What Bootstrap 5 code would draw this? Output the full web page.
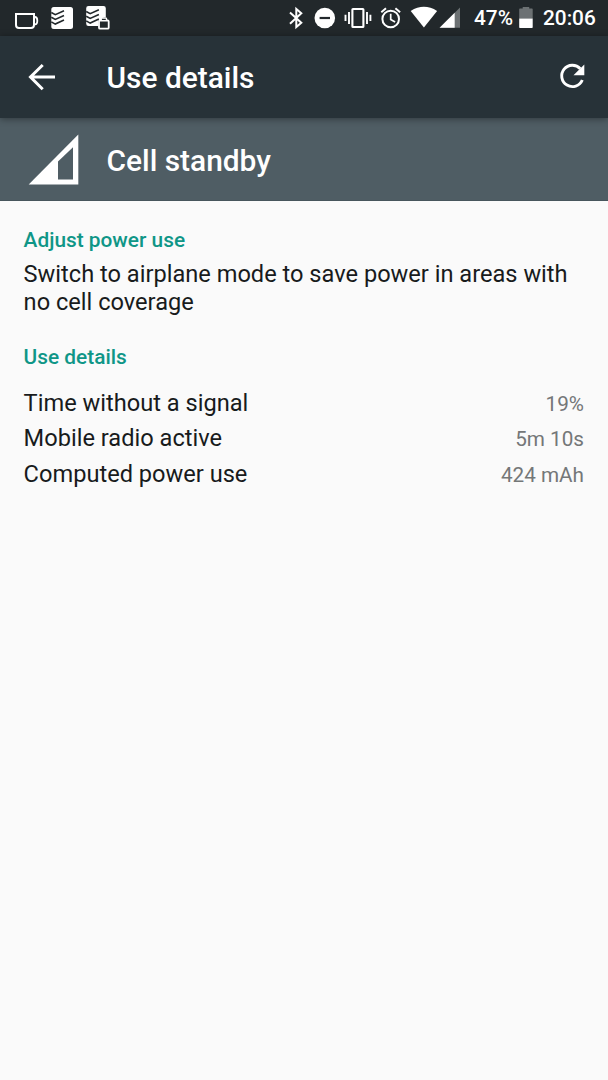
<!DOCTYPE html>
<html lang="en">
<head>
<meta charset="utf-8">
<meta name="viewport" content="width=device-width, initial-scale=1">
<title>Use details</title>
<link href="https://cdn.jsdelivr.net/npm/bootstrap@5.3.0/dist/css/bootstrap.min.css" rel="stylesheet">
<style>
  body { font-family: Roboto, "Liberation Sans", sans-serif; background: #fafafa; color: #181b1c; min-height: 100vh; }
  svg { display: block; flex: none; }
  .status-strip { height: 35.5px; background: #22282b; color: #fff; padding: 0 12px; font-size: 20.8px; font-weight: 500; line-height: 37px; }
  .battery-level { width: 44px; }
  .clock { width: 53px; }
  .app-header { height: 82.5px; background: #273238; color: #fff; padding: 0 20px 0 24px; box-shadow: 0 1px 7px rgba(0,0,0,.4); z-index: 1; }
  .screen-title { font-size: 29.9px; font-weight: 500; line-height: 36px; margin: 0 0 0 46.5px; padding-top: 2px; }
  .entry-header { height: 82.5px; background: #4f5d64; color: #fff; padding-left: 24px; border-bottom: 1px solid #47555c; }
  .entry-title { margin-left: 22.5px; padding-top: 4px; }
  .section-title { font-size: 20.85px; font-weight: 500; line-height: 24px; color: #0f9687; margin: 0; }
  .details { padding: 27px 24px 0 23.6px; }
  .tip { font-size: 23.62px; line-height: 28px; margin: 8px 0 29.4px; }
  .stat { height: 35.5px; font-size: 23.62px; line-height: 28px; }
  .stat dt { font-weight: 400; }
  .stat dd { font-size: 20.7px; color: #747778; margin: 0; padding-top: 1px; }
</style>
</head>
<body>
<div class="status-strip d-flex align-items-start">
  <svg width="28" height="35" viewBox="12 0 28 35" fill="none" stroke="#fff"><path d="M16 14h18v11q0 3-3 3H19q-3 0-3-3z" stroke-width="2"/><path d="M34 17h1q2.300 0 2.300 3.700T35 24.300h-1" stroke-width="1.800"/></svg>
  <svg width="44" height="35" viewBox="40 0 44 35"><rect x="51.300" y="7" width="21.700" height="22" rx="2.500" fill="#fff"/><path d="M51.300 12.500l4 2.200 8.700-4M51.300 17.200l4 2.200 8.700-4M51.300 21.900l4 2.200 8.700-4" fill="none" stroke="#22282b" stroke-width="1.600"/></svg>
  <svg width="28" height="35" viewBox="84 0 28 35"><path d="M88.500 6h15q2.300 0 2.300 2.300V17q-4 0-4.500 3h-3v6H88.500q-2.300 0-2.300-2.300V8.300Q86.200 6 88.500 6z" fill="#fff"/><path d="M86.200 11.500l4 2.200 8.700-4M86.200 16.200l4 2.200 8.700-4M86.200 20.900l4 2.200 8.700-4" fill="none" stroke="#22282b" stroke-width="1.600"/><rect x="99" y="20.500" width="9.700" height="8.200" rx="1" fill="#22282b" stroke="#fff" stroke-width="1.800"/><path d="M101.200 20v-1.200q0-.8.8-.8h3.700q.8 0 .8.800V20" fill="#22282b" stroke="#fff" stroke-width="1.400"/></svg>
  <svg class="ms-auto" width="28" height="35" viewBox="284 0 28 35"><path d="M290 12.500l11.300 10.300-5 4.200V9l5 4.200L290 23.700" fill="none" stroke="#fff" stroke-width="2"/></svg>
  <svg width="28" height="35" viewBox="312 0 28 35"><circle cx="324.800" cy="18" r="10.300" fill="#fff"/><path d="M319.600 18h10.400" stroke="#22282b" stroke-width="2.200"/></svg>
  <svg width="36" height="35" viewBox="340 0 36 35" fill="none" stroke="#fff"><rect x="352.400" y="9" width="11" height="18" rx=".6" stroke-width="2.100"/><path d="M349 12v12M367 12v12M345.500 14.800v6.200M370.400 14.800v6.200" stroke-width="1.900"/></svg>
  <svg width="31" height="35" viewBox="376 0 31 35" fill="none" stroke="#fff"><circle cx="390.700" cy="19" r="8.300" stroke-width="2"/><path d="M390.700 13.800v5.700l4.400 2.600" stroke-width="1.700"/><path d="M381.300 12.200l4.700-3.900M400.100 12.200l-4.700-3.900" stroke-width="2"/></svg>
  <svg width="31" height="35" viewBox="407 0 31 35"><path d="M410.700 11q13.200-8.400 26.400 0L423.900 27.500z" fill="#fff"/></svg>
  <svg width="36" height="35" viewBox="438 0 36 35"><path d="M460 7.500V27.700H439.600z" fill="#6c7173"/><path d="M454.700 12.700v15H439.600z" fill="#fff"/></svg>
  <span class="battery-level">47%</span>
  <svg width="25" height="35" viewBox="518 0 25 35"><path d="M519.200 9.200q0-.7.7-.7h2.800V7h6.500v1.500h2.800q.7 0 .7.700V18.500h-13.500z" fill="#6c7173"/><path d="M519.200 18.500h13.500v8.800q0 .7-.7.700h-12.100q-.7 0-.7-.7z" fill="#fff"/></svg>
  <span class="clock">20:06</span>
</div>
<header class="app-header position-relative d-flex align-items-center">
  <svg width="36" height="36" viewBox="24 59 36 36"><path d="M55 77H30.500M42.700 65L30.500 77l12.200 12.200" fill="none" stroke="#fff" stroke-width="3"/></svg>
  <h1 class="screen-title">Use details</h1>
  <svg class="ms-auto" width="36" height="36" viewBox="552 59 36 36"><path d="M580.300 68.700A10.700 10.700 0 1 0 582.300 80" fill="none" stroke="#fff" stroke-width="2.900"/><path d="M584.300 64.400v10.800h-10.800z" fill="#fff"/></svg>
</header>
<section class="entry-header d-flex align-items-center">
  <svg width="60" height="60" viewBox="24 129 60 60"><path d="M78.300 134.600v49.800H28.700z" fill="#fff"/><path d="M73 147.300V179.500H58V161.500z" fill="#4f5d64"/></svg>
  <h2 class="screen-title entry-title">Cell standby</h2>
</section>
<main class="details">
  <h3 class="section-title">Adjust power use</h3>
  <p class="tip">Switch to airplane mode to save power in areas with no cell coverage</p>
  <h3 class="section-title">Use details</h3>
  <dl class="mb-0 mt-3 pt-1">
    <div class="stat d-flex justify-content-between"><dt>Time without a signal</dt><dd>19%</dd></div>
    <div class="stat d-flex justify-content-between"><dt>Mobile radio active</dt><dd>5m 10s</dd></div>
    <div class="stat d-flex justify-content-between"><dt>Computed power use</dt><dd>424 mAh</dd></div>
  </dl>
</main>
<script src="https://cdn.jsdelivr.net/npm/bootstrap@5.3.0/dist/js/bootstrap.bundle.min.js"></script>
</body>
</html>
